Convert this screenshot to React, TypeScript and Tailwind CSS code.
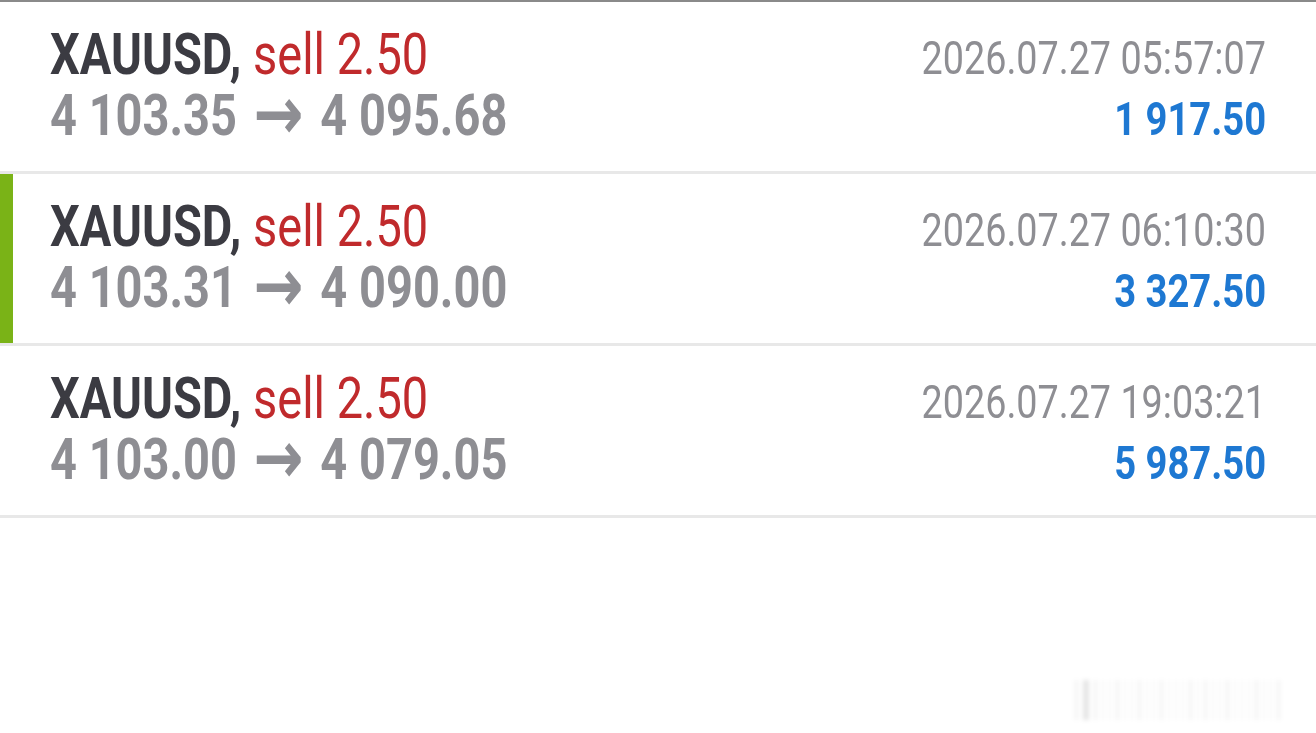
import React from 'react';

interface Deal {
  symbol: string;
  side: string;
  lots: string;
  open: string;
  close: string;
  time: string;
  profit: string;
  active?: boolean;
}

const deals: Deal[] = [
  { symbol: 'XAUUSD', side: 'sell', lots: '2.50', open: '4 103.35', close: '4 095.68', time: '2026.07.27 05:57:07', profit: '1 917.50' },
  { symbol: 'XAUUSD', side: 'sell', lots: '2.50', open: '4 103.31', close: '4 090.00', time: '2026.07.27 06:10:30', profit: '3 327.50', active: true },
  { symbol: 'XAUUSD', side: 'sell', lots: '2.50', open: '4 103.00', close: '4 079.05', time: '2026.07.27 19:03:21', profit: '5 987.50' },
];

// faint watermark bars, bottom right
const bars = [3, 2, 4, 1, 2, 3, 1, 2, 4, 2, 1, 3, 2, 2, 1, 3, 2, 4, 1, 2, 3, 1, 2, 2, 3, 1, 2, 3];

function DealRow({ d }: { d: Deal }) {
  return (
    <div className="relative h-[172px] border-b-[3px] border-[#e8e8e8] pl-[50px] pr-[50px] pt-[23px]">
      {d.active && <div className="absolute left-0 top-0 bottom-0 w-[13px] bg-[#7ab317]" />}
      <div className="flex h-[59px] items-baseline justify-between leading-[59px]">
        <span className="origin-left scale-x-[0.81] whitespace-nowrap text-[58px]">
          <span className="font-bold text-[#3b3b42]">{d.symbol}, </span>
          <span className="text-[#c02a2c]">{d.side} {d.lots}</span>
        </span>
        <span className="origin-right scale-x-[0.82] whitespace-nowrap text-[46px] text-[#8e8e93]">{d.time}</span>
      </div>
      <div className="flex h-[59px] items-baseline justify-between leading-[59px]">
        <span className="origin-left scale-x-[0.81] whitespace-nowrap text-[58px] font-bold text-[#8e8e93]">
          {d.open}{' '}
          <span className="mx-[6px] align-[-4px] font-['DejaVu_Sans',sans-serif] text-[74px] leading-[59px]">→</span>{' '}
          {d.close}
        </span>
        <span className="origin-right scale-x-[0.83] whitespace-nowrap text-[46px] font-bold text-[#1e78d2]">{d.profit}</span>
      </div>
    </div>
  );
}

export default function App() {
  return (
    <div className="relative h-[733px] w-[1316px] overflow-hidden bg-white font-['Roboto',sans-serif]">
      <div className="h-[2px] bg-[#8a8a8a]" />
      {deals.map((d, i) => (
        <DealRow key={i} d={d} />
      ))}
      <div className="absolute left-[1075px] top-[680px] flex h-[40px] w-[220px] items-stretch gap-[5px] blur-[2px]">
        {bars.map((w, i) => (
          <div key={i} className={i === 1 ? 'w-[6px] bg-black/10' : w > 2 ? 'w-[3px] bg-black/5' : 'w-[2px] bg-black/[0.03]'} />
        ))}
      </div>
    </div>
  );
}
